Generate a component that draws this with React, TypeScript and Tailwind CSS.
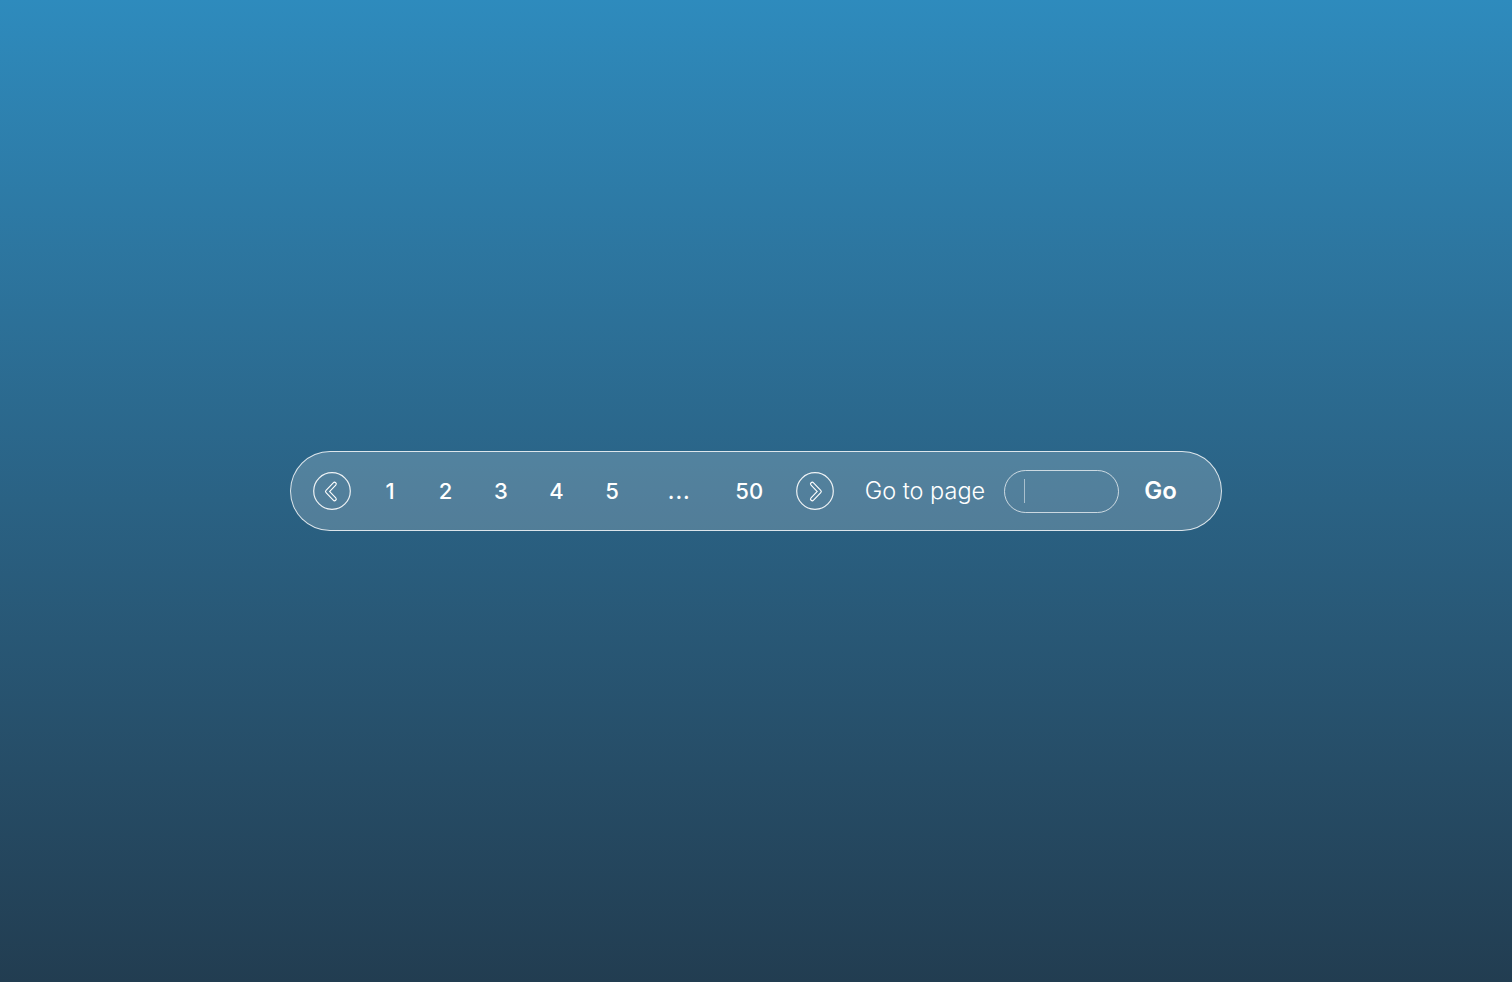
import React, { useState } from 'react';

// Outlined chevron: a thick rounded stroke with its middle cut out by a mask
function ChevronCircle({ dir, id }: { dir: 'left' | 'right'; id: string }) {
  const d = dir === 'left' ? 'M21.5 12 L14.3 19.5 L21.5 27' : 'M16.3 12 L23.5 19.5 L16.3 27';
  return (
    <button className="w-[38px] h-[38px] shrink-0 flex items-center justify-center">
      <svg width="38" height="38" viewBox="0 0 38 38" fill="none">
        <circle cx="19" cy="19" r="18.3" stroke="white" strokeOpacity="0.9" strokeWidth="1.2" />
        <mask id={id} maskUnits="userSpaceOnUse" x="0" y="0" width="38" height="38">
          <rect width="38" height="38" fill="white" />
          <path d={d} stroke="black" strokeWidth="2.4" strokeLinecap="round" strokeLinejoin="round" />
        </mask>
        <path
          d={d}
          stroke="white"
          strokeWidth="4.6"
          strokeLinecap="round"
          strokeLinejoin="round"
          mask={`url(#${id})`}
        />
      </svg>
    </button>
  );
}

export default function App() {
  const [page, setPage] = useState('');
  const pages = ['1', '2', '3', '4', '5'];

  return (
    <div
      className="w-full h-[982px] flex items-center justify-center bg-gradient-to-b from-[#2e8bbd] to-[#223d51]"
      style={{ fontFamily: 'Inter, "Noto Sans", sans-serif' }}
    >
      <div className="flex items-center h-[80px] pl-[22px] pr-[44px] rounded-full border border-white/80 bg-white/[0.19]">
        <ChevronCircle dir="left" id="chev-l" />

        <div className="flex items-center ml-[11px] text-white text-[22px] font-medium">
          {pages.map(p => (
            <span key={p} className="w-[55.5px] text-center">{p}</span>
          ))}
          <span className="w-[79px] text-center tracking-[1px]">...</span>
          <span className="w-[61px] text-center">50</span>
        </div>

        <div className="ml-[16px]">
          <ChevronCircle dir="right" id="chev-r" />
        </div>

        <span className="ml-[31px] text-white text-[23.5px] font-light">Go to page</span>

        <div className="ml-[19px] w-[115px] h-[43px] rounded-full border border-white/70 flex items-center pl-[19px]">
          <span className="w-px h-[24px] bg-white/50" />
          <input
            value={page}
            onChange={e => setPage(e.target.value)}
            className="w-0 flex-1 bg-transparent outline-none text-white"
          />
        </div>

        <span className="ml-[25px] text-white text-[24px] font-semibold">Go</span>
      </div>
    </div>
  );
}
